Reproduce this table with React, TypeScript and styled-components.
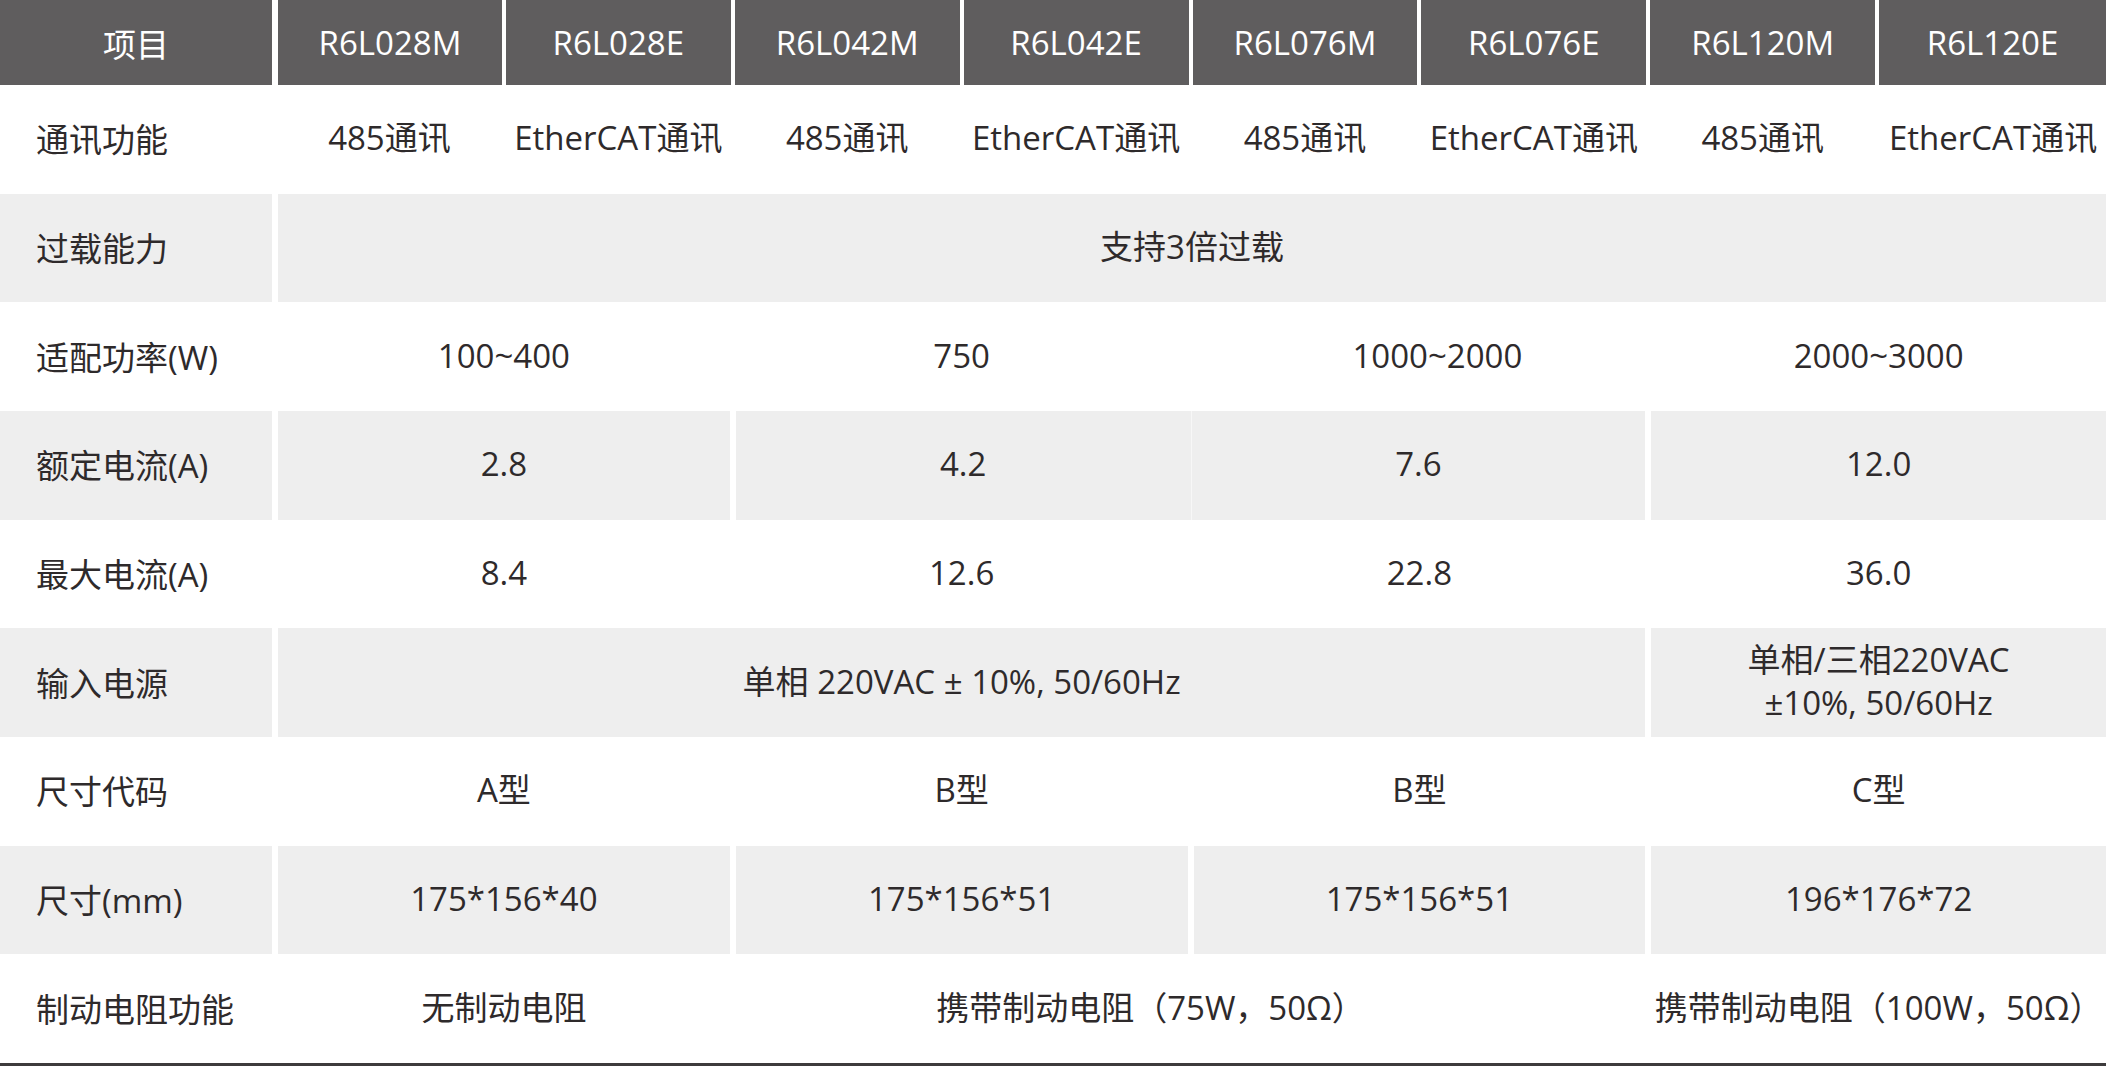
import styled, { createGlobalStyle } from "styled-components";

const GlobalStyle = createGlobalStyle`
    html, body {
        margin: 0;
        padding: 0;
        background: #fff;
    }
    body {
        font-family: "Open Sans", "Noto Sans CJK SC", sans-serif;
        font-weight: 400;
        color: #2e2a2b;
    }
`;

const Table = styled.div`
    display: grid;
    grid-template-columns: 275px repeat(8, 1fr);
    grid-template-rows: 85px repeat(9, 1fr);
    width: 2106px;
    height: 1063px;
    border-bottom: 3px solid #3d3b3c;
    font-size: 33px;
`;

const HeadCell = styled.div<{ $first?: boolean; $last?: boolean }>`
    display: flex;
    align-items: center;
    justify-content: center;
    background: #5f5d5e;
    background-clip: padding-box;
    color: #fff;
    border-left: ${(p) => (p.$first ? "0" : "2px")} solid #fff;
    border-right: ${(p) => (p.$last ? "0" : "2px")} solid #fff;
    &:nth-child(2) {
        border-left-width: 3px;
    }
    &:first-child {
        border-right-width: 3px;
    }
`;

const Label = styled.div<{ $shade: boolean }>`
    display: flex;
    align-items: center;
    padding-left: 36px;
    padding-bottom: 2px;
    background: ${(p) => (p.$shade ? "#eeeeee" : "#fff")};
    background-clip: padding-box;
    border-right: 3px solid #fff;
`;

const Value = styled.div<{
    $shade: boolean;
    $span: number;
    $last: boolean;
    $nudge: number;
    $seamLeft?: boolean;
    $seamRight?: boolean;
}>`
    grid-column: span ${(p) => p.$span};
    display: flex;
    align-items: center;
    justify-content: center;
    text-align: center;
    line-height: 1.28;
    padding-bottom: 2px;
    background: ${(p) => (p.$shade ? "#eeeeee" : "#fff")};
    background-clip: padding-box;
    border-left: ${(p) => (p.$seamLeft ? "1px solid #f7f7f7" : "3px solid #fff")};
    border-right: ${(p) => (p.$last || p.$seamRight ? "0" : "3px solid #fff")};
    padding-left: ${(p) => Math.max(p.$nudge, 0) * 2}px;
    padding-right: ${(p) => Math.max(-p.$nudge, 0) * 2}px;
`;

type Item = { text: React.ReactNode; span: number; nudge?: number; seamLeft?: boolean; seamRight?: boolean };
type Row = { label: string; items: Item[] };

const models = ["R6L028M", "R6L028E", "R6L042M", "R6L042E", "R6L076M", "R6L076E", "R6L120M", "R6L120E"];

const rows: Row[] = [
    {
        label: "通讯功能",
        items: [
            { text: "485通讯", span: 1 },
            { text: "EtherCAT通讯", span: 1 },
            { text: "485通讯", span: 1 },
            { text: "EtherCAT通讯", span: 1 },
            { text: "485通讯", span: 1 },
            { text: "EtherCAT通讯", span: 1 },
            { text: "485通讯", span: 1 },
            { text: "EtherCAT通讯", span: 1 },
        ],
    },
    { label: "过载能力", items: [{ text: "支持3倍过载", span: 8 }] },
    {
        label: "适配功率(W)",
        items: [
            { text: "100~400", span: 2 },
            { text: "750", span: 2 },
            { text: "1000~2000", span: 2, nudge: 18 },
            { text: "2000~3000", span: 2 },
        ],
    },
    {
        label: "额定电流(A)",
        items: [
            { text: "2.8", span: 2 },
            { text: "4.2", span: 2, seamRight: true },
            { text: "7.6", span: 2, seamLeft: true },
            { text: "12.0", span: 2 },
        ],
    },
    {
        label: "最大电流(A)",
        items: [
            { text: "8.4", span: 2 },
            { text: "12.6", span: 2 },
            { text: "22.8", span: 2 },
            { text: "36.0", span: 2 },
        ],
    },
    {
        label: "输入电源",
        items: [
            { text: "单相 220VAC ± 10%, 50/60Hz", span: 6 },
            {
                text: (
                    <>
                        单相/三相220VAC
                        <br />
                        ±10%, 50/60Hz
                    </>
                ),
                span: 2,
            },
        ],
    },
    {
        label: "尺寸代码",
        items: [
            { text: "A型", span: 2 },
            { text: "B型", span: 2 },
            { text: "B型", span: 2 },
            { text: "C型", span: 2 },
        ],
    },
    {
        label: "尺寸(mm)",
        items: [
            { text: "175*156*40", span: 2 },
            { text: "175*156*51", span: 2 },
            { text: "175*156*51", span: 2 },
            { text: "196*176*72", span: 2 },
        ],
    },
    {
        label: "制动电阻功能",
        items: [
            { text: "无制动电阻", span: 2 },
            { text: "携带制动电阻（75W，50Ω）", span: 4, nudge: -40 },
            { text: "携带制动电阻（100W，50Ω）", span: 2 },
        ],
    },
];

export default function App() {
    return (
        <>
            <GlobalStyle />
            <Table>
                <HeadCell $first>项目</HeadCell>
                {models.map((m, i) => (
                    <HeadCell key={m} $last={i === models.length - 1}>
                        {m}
                    </HeadCell>
                ))}
                {rows.map((row, r) => {
                    const shade = r % 2 === 1;
                    return (
                        <>
                            <Label key={row.label} $shade={shade}>
                                {row.label}
                            </Label>
                            {row.items.map((it, i) => (
                                <Value
                                    key={row.label + i}
                                    $shade={shade}
                                    $span={it.span}
                                    $last={i === row.items.length - 1}
                                    $nudge={it.nudge ?? 0}
                                    $seamLeft={it.seamLeft}
                                    $seamRight={it.seamRight}
                                >
                                    {it.text}
                                </Value>
                            ))}
                        </>
                    );
                })}
            </Table>
        </>
    );
}
